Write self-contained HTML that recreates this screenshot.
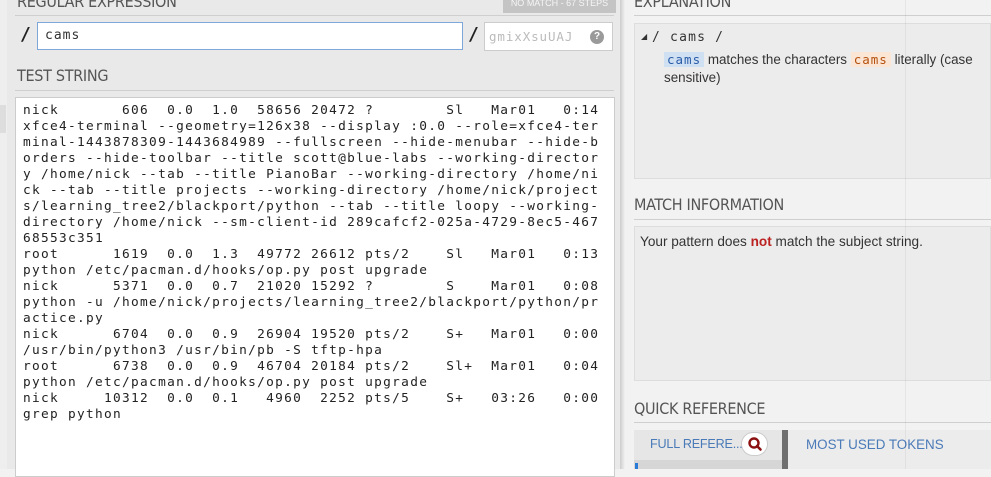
<!DOCTYPE html>
<html><head><meta charset="utf-8"><style>
*{margin:0;padding:0;box-sizing:border-box}
body{width:991px;height:469px;overflow:hidden;background:#f2f2f2;font-family:"Liberation Sans","DejaVu Sans",sans-serif;position:relative}
.abs{position:absolute}
.h{font-family:"DejaVu Sans Condensed","DejaVu Sans",sans-serif;font-size:16px;color:#555;letter-spacing:-0.3px}
pre{font-family:"DejaVu Sans Mono",monospace;font-size:12.8px;letter-spacing:1.3px;line-height:16px;color:#222}
</style></head><body>
<div class="abs" style="left:0;top:0;width:7px;height:469px;background:#eee"></div>
<div class="abs" style="left:0;top:105px;width:6px;height:28px;background:#ddd"></div>
<div class="abs" style="left:7px;top:0;width:614px;height:469px;background:#e9e9e9"></div>
<div class="abs" style="left:620px;top:0;width:5px;height:469px;background:linear-gradient(90deg,#ccc,#f2f2f2)"></div>
<div class="abs h" style="left:17px;top:-8px">REGULAR EXPRESSION</div>
<div class="abs" style="left:503px;top:-6px;width:113px;height:19px;background:#c4c4c4;color:#f5f5f5;font-size:9px;text-align:center;line-height:18px">NO MATCH - 67 STEPS</div>
<div class="abs" style="left:15px;top:15px;width:599px;height:1px;background:#cfcfcf"></div>
<div class="abs" style="left:20px;top:24px;font-family:'DejaVu Sans Mono';font-size:18px;font-weight:bold;color:#222">/</div>
<div class="abs" style="left:37px;top:22px;width:426px;height:28px;background:#fff;border:1px solid #7fa8d8"></div>
<div class="abs" style="left:45px;top:28px;font-family:'DejaVu Sans Mono';font-size:13px;letter-spacing:1px;color:#333">cams</div>
<div class="abs" style="left:468px;top:24px;font-family:'DejaVu Sans Mono';font-size:18px;font-weight:bold;color:#222">/</div>
<div class="abs" style="left:484px;top:22px;width:129px;height:29px;background:#fff;border:1px solid #ccc"></div>
<div class="abs" style="left:489px;top:29px;font-family:'DejaVu Sans Mono';font-size:12.5px;letter-spacing:0.9px;color:#bbb">gmixXsuUAJ</div>
<div class="abs" style="left:590px;top:30px;width:14px;height:14px;border-radius:50%;background:#9a9a9a;color:#fff;font-size:10px;font-weight:bold;text-align:center;line-height:14px">?</div>
<div class="abs h" style="left:17px;top:66px">TEST STRING</div>
<div class="abs" style="left:15px;top:90px;width:599px;height:1px;background:#cfcfcf"></div>
<div class="abs" style="left:15px;top:97px;width:600px;height:380px;background:#fff;border:1px solid #ccc"></div>
<pre class="abs" style="left:23px;top:103px">nick       606  0.0  1.0  58656 20472 ?        Sl   Mar01   0:14
xfce4-terminal --geometry=126x38 --display :0.0 --role=xfce4-ter
minal-1443878309-1443684989 --fullscreen --hide-menubar --hide-b
orders --hide-toolbar --title scott@blue-labs --working-director
y /home/nick --tab --title PianoBar --working-directory /home/ni
ck --tab --title projects --working-directory /home/nick/project
s/learning_tree2/blackport/python --tab --title loopy --working-
directory /home/nick --sm-client-id 289cafcf2-025a-4729-8ec5-467
68553c351
root      1619  0.0  1.3  49772 26612 pts/2    Sl   Mar01   0:13
python /etc/pacman.d/hooks/op.py post upgrade
nick      5371  0.0  0.7  21020 15292 ?        S    Mar01   0:08
python -u /home/nick/projects/learning_tree2/blackport/python/pr
actice.py
nick      6704  0.0  0.9  26904 19520 pts/2    S+   Mar01   0:00
/usr/bin/python3 /usr/bin/pb -S tftp-hpa
root      6738  0.0  0.9  46704 20184 pts/2    Sl+  Mar01   0:04
python /etc/pacman.d/hooks/op.py post upgrade
nick     10312  0.0  0.1   4960  2252 pts/5    S+   03:26   0:00
grep python</pre>
<div class="abs h" style="left:634px;top:-8px">EXPLANATION</div>
<div class="abs" style="left:634px;top:15px;width:357px;height:1px;background:#cfcfcf"></div>
<div class="abs" style="left:634px;top:23px;width:357px;height:156px;background:#ececec;border:1px solid #ddd"></div>
<div class="abs" style="left:641px;top:32px;font-size:8px;color:#333">◢</div>
<div class="abs" style="left:652px;top:30px;font-family:'DejaVu Sans Mono';font-size:13px;letter-spacing:1.2px;color:#333">/ cams /</div>
<div class="abs" style="left:664px;top:51px;font-size:13.4px;color:#333;line-height:18px;width:320px"><span style="background:#cfe0f3;color:#2a5ca8;font-family:'DejaVu Sans Mono';font-size:12.5px;letter-spacing:1px;padding:0 3px">cams</span> matches the characters <span style="background:#fbe6d5;color:#b5500e;font-family:'DejaVu Sans Mono';font-size:12.5px;letter-spacing:1px;padding:0 3px">cams</span> literally (case sensitive)</div>
<div class="abs h" style="left:634px;top:195px">MATCH INFORMATION</div>
<div class="abs" style="left:634px;top:219px;width:357px;height:1px;background:#cfcfcf"></div>
<div class="abs" style="left:634px;top:226px;width:357px;height:155px;background:#ececec;border:1px solid #ddd"></div>
<div class="abs" style="left:640px;top:234px;font-size:13.6px;color:#333">Your pattern does <b style="color:#b22">not</b> match the subject string.</div>
<div class="abs h" style="left:634px;top:399px">QUICK REFERENCE</div>
<div class="abs" style="left:634px;top:422px;width:357px;height:1px;background:#cfcfcf"></div>
<div class="abs" style="left:634px;top:430px;width:148px;height:39px;background:#e6e6e6"></div>
<div class="abs" style="left:634px;top:460px;width:148px;height:9px;background:#d6d6d6"></div>
<div class="abs" style="left:635px;top:463px;width:3px;height:6px;background:#2a7ad8"></div>
<div class="abs" style="left:782px;top:430px;width:6px;height:39px;background:#6f6f6f"></div>
<div class="abs" style="left:788px;top:430px;width:203px;height:39px;background:#ececec"></div>
<div class="abs" style="left:650px;top:437px;font-size:12.6px;color:#4a7ab8;letter-spacing:-0.2px">FULL REFERE...</div>
<div class="abs" style="left:741px;top:432px;width:27px;height:24px;border-radius:12px;background:#fff;border:1px solid #ccc"></div>
<svg class="abs" style="left:746px;top:435px" width="18" height="18" viewBox="0 0 18 18"><circle cx="8" cy="8" r="4.5" fill="none" stroke="#8b1010" stroke-width="2.4"/><line x1="11" y1="11" x2="14.5" y2="14.5" stroke="#8b1010" stroke-width="2.6" stroke-linecap="round"/></svg>
<div class="abs" style="left:806px;top:437px;font-size:13.4px;color:#4a7ab8">MOST USED TOKENS</div>
<div class="abs" style="left:905px;top:0;width:1px;height:469px;background:rgba(0,0,0,0.05)"></div>
</body></html>
